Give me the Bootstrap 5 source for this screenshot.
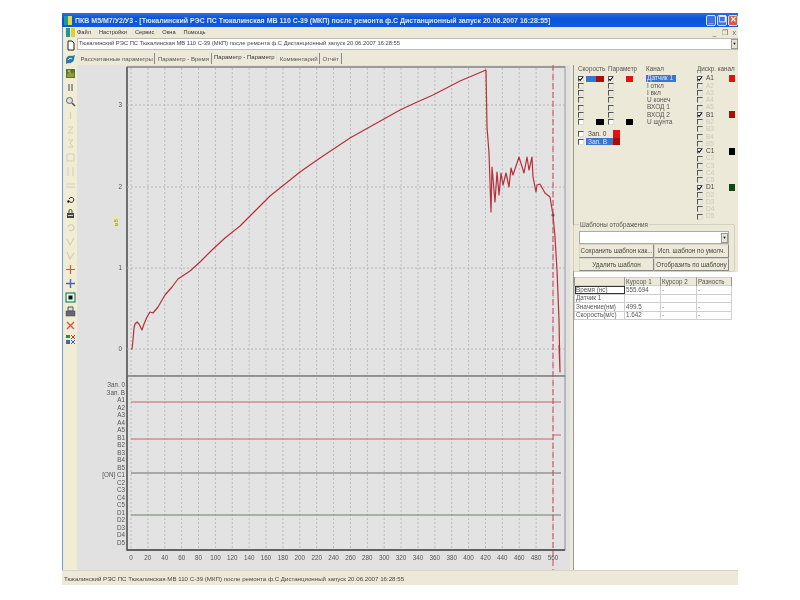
<!DOCTYPE html>
<html lang="ru">
<head>
<meta charset="UTF-8">
<title>ПКВ М5/М7/У2/У3</title>
<link href="https://cdn.jsdelivr.net/npm/bootstrap@5.3.3/dist/css/bootstrap.min.css" rel="stylesheet">
<style>
html, body { height: 100%; background: #fff; overflow: hidden; }
body { font-family: "Liberation Sans", "Noto Sans", sans-serif; font-size: 6.5px; line-height: 1; color: #444; }
.shell { padding: 13px 62px 14px 62px; height: 600px; filter: blur(.35px); }
.app { height: 572px; background: #ece9d8; }
.titlebar { height: 14px; background: linear-gradient(#2a6fe0, #0a54d6 40%, #0b5be2); color: #dfe9fb; font-size: 7px; font-weight: 700; padding-left: 2px; }
.app-ico { width: 8px; height: 9px; margin-right: 3px; background: linear-gradient(90deg, #1f9a8a 50%, #e9d44c 50%); }
.win-btn { width: 10px; height: 11px; margin-left: 1px; border-radius: 2px; border: 1px solid #cfe0fa; background: #3f74e0; font-size: 8px; color: #fff; }
.win-btn.close-x { background: #dd5a3a; }
.side { width: 15px; border-left: 1px solid #6f9ad8; background: #f0edd4; }
.tool { height: 14px; }
.tool svg { width: 11px; height: 11px; }
.tool.first { height: 11px; }
.menu { height: 11px; background: #ece9d8; }
.menu .nav-link { padding: 0 8px 0 0; color: #333; font-size: 5.7px; }
.mdi { font-size: 7px; color: #666; gap: 5px; padding-right: 2px; }
.docbox { height: 12px; background: #fff; border: 1px solid #bbb; border-right: 0; padding-left: 1px; font-size: 5.8px; color: #444; }
.drop { width: 7px; height: 10px; background: #e6e3d4; border: 1px solid #999; font-size: 4px; color: #000; }
.tabs { height: 15px; border: 0; padding-left: 1px; gap: 0; }
.tabs .nav-link { border: 0; border-right: 1px solid #888; border-radius: 0; background: transparent; color: #555; font-size: 6px; padding: 3px 1.5px 0 2.5px; height: 11px; margin-top: 3px; }
.tabs .nav-link.active { background: #ece9d8; color: #333; margin-top: 1px; height: 13px; }
.chart { width: 493px; height: 505px; background: #e1e1e1; }
.chart svg { display: block; }
.chart text { font-family: "Liberation Sans", sans-serif; font-size: 6.3px; fill: #555; }
.edge { width: 3px; }
.right { width: 165px; border-left: 1px solid #999; }
.top-block { height: 159px; padding: 1px 0 0 4px; }
.hd { height: 7px; font-size: 6.3px; color: #555; margin-bottom: 2px; white-space: nowrap; }
.r { height: 7.27px; }
.cb.form-check-input { width: 6px; height: 6px; margin: 0; flex: none; border-radius: 0; border: 1px solid #ddd; border-top-color: #555; border-left-color: #555; background-color: transparent; }
.cb.form-check-input.on { background-color: #fff; }
.cb.form-check-input:checked { background-color: #fff; background-size: 6px; background-image: url("data:image/svg+xml,%3csvg xmlns='http://www.w3.org/2000/svg' viewBox='0 0 6 6'%3e%3cpath d='M1 3l1.2 1.4L5 1' fill='none' stroke='%23000' stroke-width='1.1'/%3e%3c/svg%3e"); }
.col-speed { width: 30px; }
.col-param { width: 38px; }
.col-chan { width: 51px; }
.col-disc { width: 41px; }
.sw { display: block; height: 6px; }
.sw-blue { width: 10px; background: #3d74cf; margin-left: 2px; }
.sw-dred { width: 8px; background: #b00c0c; }
.sw-blk { width: 8px; background: #000; margin-left: 12px; }
.sw-red { width: 7px; background: #e01212; margin-left: 12px; }
.sw-blk2 { width: 7px; background: #000; margin-left: 12px; }
.chan { padding-left: 1px; color: #555; }
.chan.sel { background: #3d74cf; color: #dbe7fa; width: 30px; }
.disc-name { width: 26px; padding-left: 3px; color: #ccc9bb; }
.disc-name.act { color: #444; }
.disc-sq { width: 6px; height: 7px; }
.zap { margin-top: 4px; }
.zap-row { height: 8px; }
.zap-sel { background: #3d74cf; color: #dbe7fa; width: 27px; margin-left: 2px; padding-left: 2px; height: 7px; }
.zap-lbl { width: 27px; margin-left: 2px; padding-left: 2px; }
.zap-sq { width: 7px; height: 15px; background: linear-gradient(#e01212 50%, #a80c0c 50%); }
.tpl { height: 48px; margin: 0 3px 0 -1px; border: 1px solid #d3d0bd; border-radius: 2px; padding: 6px 5px 0 5px; position: relative; }
.tpl legend { position: absolute; top: -3px; left: 5px; width: auto; float: none; margin: 0; font-size: 6.3px; color: #555; background: #ece9d8; padding: 0 1px; }
.tplsel { height: 13px; background: #fff; border: 1px solid #aaa; }
.tpl .btn { flex: 0 0 50%; height: 13.5px; padding: 0; font-size: 6.3px; color: #444; background: #ece9d8; border: 1px solid #d8d5c4; border-radius: 0; border-right-color: #888; border-bottom-color: #888; }
.white { background: #fff; padding-top: 5px; }
.grid-t { width: 157px; table-layout: fixed; margin: 0; font-size: 6.3px; border-color: #cfcfcf; }
.grid-t th, .grid-t td { padding: 0 1px; height: 8.4px; font-weight: 400; color: #555; line-height: 1; vertical-align: middle; }
.grid-t th { background: #ece9d8; border-color: #999; }
.grid-t .focus { outline: 1px solid #333; outline-offset: -1px; }
.status { height: 15px; padding: 5px 0 0 2px; border-top: 1px solid #d8d5c4; font-size: 6.15px; color: #444; }
</style>
</head>
<body>
<div class="shell">
  <div class="app d-flex flex-column">
    <div class="titlebar d-flex align-items-center">
      <span class="app-ico"></span>
      <span class="flex-grow-1 text-nowrap">ПКВ М5/М7/У2/У3 - [Тюкалинский РЭС ПС Тюкалинская МВ 110 С-39 (МКП) после ремонта ф.С Дистанционный запуск 20.06.2007 16:28:55]</span>
      <span class="win-btn d-flex align-items-end justify-content-center">_</span>
      <span class="win-btn d-flex align-items-center justify-content-center">❐</span>
      <span class="win-btn close-x d-flex align-items-center justify-content-center">✕</span>
    </div>
    <div class="d-flex flex-grow-1" style="min-height:0">
      <div class="side d-flex flex-column" id="side"></div>
      <div class="flex-grow-1 d-flex flex-column" style="min-width:0">
        <div class="menu d-flex align-items-center justify-content-between">
          <ul class="nav">
            <li class="nav-item"><a class="nav-link" href="#">Файл</a></li>
            <li class="nav-item"><a class="nav-link" href="#">Настройки</a></li>
            <li class="nav-item"><a class="nav-link" href="#">Сервис</a></li>
            <li class="nav-item"><a class="nav-link" href="#">Окна</a></li>
            <li class="nav-item"><a class="nav-link" href="#">Помощь</a></li>
          </ul>
          <div class="mdi d-flex"><span>_</span><span>❐</span><span>x</span></div>
        </div>
        <div class="docbox d-flex align-items-center justify-content-between">
          <span class="text-nowrap">Тюкалинский РЭС ПС Тюкалинская МВ 110 С-39 (МКП) после ремонта ф.С Дистанционный запуск 20.06.2007 16:28:55</span>
          <span class="drop d-flex align-items-center justify-content-center">▼</span>
        </div>
        <ul class="nav nav-tabs tabs">
          <li class="nav-item"><a class="nav-link" href="#">Рассчитанные параметры</a></li>
          <li class="nav-item"><a class="nav-link" href="#">Параметр - Время</a></li>
          <li class="nav-item"><a class="nav-link active" href="#">Параметр - Параметр</a></li>
          <li class="nav-item"><a class="nav-link" href="#">Комментарий</a></li>
          <li class="nav-item"><a class="nav-link" href="#">Отчёт</a></li>
        </ul>
        <div class="d-flex flex-grow-1" style="min-height:0">
          <div class="chart"><svg id="plot" width="493" height="505" viewBox="77 65 493 505" xmlns="http://www.w3.org/2000/svg"></svg></div>
          <div class="edge"></div>
          <div class="right d-flex flex-column">
            <div class="top-block d-flex">
              <div>
                <div class="d-flex">
                  <div class="col-speed"><div class="hd">Скорость</div><div id="speed"></div></div>
                  <div class="col-param"><div class="hd">Параметр</div><div id="param"></div></div>
                </div>
                <div class="zap d-flex">
                  <div>
                    <div class="zap-row d-flex align-items-center"><input class="cb form-check-input on" type="checkbox"><span class="zap-lbl">Зап. 0</span></div>
                    <div class="zap-row d-flex align-items-center"><input class="cb form-check-input on" type="checkbox"><span class="zap-sel d-flex align-items-center">Зап. В</span></div>
                  </div>
                  <div class="zap-sq"></div>
                </div>
              </div>
              <div class="col-chan"><div class="hd">Канал</div><div id="chan"></div></div>
              <div class="col-disc"><div class="hd">Дискр. канал</div><div id="disc"></div></div>
            </div>
            <fieldset class="tpl">
              <legend>Шаблоны отображения</legend>
              <div class="tplsel d-flex justify-content-end align-items-center"><span class="drop d-flex align-items-center justify-content-center">▼</span></div>
              <div class="d-flex flex-wrap">
                <button type="button" class="btn">Сохранить шаблон как...</button>
                <button type="button" class="btn">Исп. шаблон по умолч.</button>
                <button type="button" class="btn">Удалить шаблон</button>
                <button type="button" class="btn">Отобразить по шаблону</button>
              </div>
            </fieldset>
            <div class="white flex-grow-1">
              <table class="table table-bordered grid-t">
                <colgroup><col style="width:50px"><col style="width:36px"><col style="width:36px"><col style="width:35px"></colgroup>
                <thead><tr><th></th><th>Курсор 1</th><th>Курсор 2</th><th>Разность</th></tr></thead>
                <tbody>
                  <tr><td class="focus">Время (нс)</td><td>555.694</td><td>-</td><td>-</td></tr>
                  <tr><td>Датчик 1</td><td></td><td></td><td></td></tr>
                  <tr><td>Значение(нм)</td><td>499.5</td><td>-</td><td>-</td></tr>
                  <tr><td>Скорость(м/с)</td><td>1.642</td><td>-</td><td>-</td></tr>
                </tbody>
              </table>
            </div>
          </div>
        </div>
      </div>
    </div>
    <div class="status text-nowrap">Тюкалинский РЭС ПС Тюкалинская МВ 110 С-39 (МКП) после ремонта ф.С Дистанционный запуск 20.06.2007 16:28:55</div>
  </div>
</div>
<script src="https://cdn.jsdelivr.net/npm/bootstrap@5.3.3/dist/js/bootstrap.bundle.min.js"></script>
<script>
/* ---------- левая панель ---------- */
const fade = '#d2cfbd';
const tools = [
  '<path d="M3 1h4l2 2v7H3z" fill="#fff" stroke="#222"/>',
  '<path d="M1 6c0-4 4-5 6-4l3-1-1 4c0 3-4 5-6 4l-2 1z" fill="#2f77a8"/><path d="M3 6c1-2 3-2 4-1" stroke="#bfe" fill="none"/>',
  '<rect x="1" y="1" width="9" height="9" fill="#557a2c"/><path d="M2 7l3-4 2 3 2-2v5H2z" fill="#9c9a3a"/><circle cx="4" cy="3" r="1" fill="#d8d060"/>',
  '<path d="M4 2v7M7 2v7" stroke="#777" stroke-width="1.4"/>',
  '<circle cx="4.5" cy="4.5" r="3" fill="#dde" stroke="#666"/><path d="M7 7l3 3" stroke="#555" stroke-width="1.6"/>',
  `<path d="M5.5 2v7" stroke="${fade}" stroke-width="1.2"/>`,
  `<path d="M3 3h5L3 9h5" stroke="${fade}" fill="none"/>`,
  `<path d="M3 2h5L5 5l3 4H3" stroke="${fade}" fill="none"/>`,
  `<rect x="2" y="2" width="7" height="7" fill="none" stroke="${fade}"/>`,
  `<path d="M3 1v9M8 1v9" stroke="${fade}"/>`,
  `<path d="M1 4h9M1 7h9" stroke="${fade}"/>`,
  '<path d="M4 5a2.5 2.5 0 1 1 1 3" fill="none" stroke="#333"/><circle cx="3.5" cy="7.5" r="1.2" fill="#111"/>',
  '<rect x="2" y="5" width="7" height="5" fill="#444"/><path d="M4 5V3a1.5 1.5 0 0 1 3 0v2" fill="none" stroke="#444"/><rect x="3" y="7" width="5" height="1" fill="#dd8"/>',
  `<path d="M3 5a3 3 0 1 1 1 3" fill="none" stroke="${fade}" stroke-width="1.2"/>`,
  `<path d="M2 3l3 6 4-7" stroke="${fade}" fill="none" stroke-width="1.2"/>`,
  `<path d="M2 2l3 7 4-6" stroke="${fade}" fill="none" stroke-width="1.2"/>`,
  '<path d="M5.5 1v9M1 5.5h9" stroke="#d8504a" stroke-width="1.2"/>',
  '<path d="M5.5 1v9M1 5.5h9" stroke="#4a62c8" stroke-width="1.4"/>',
  '<rect x="1" y="1" width="9" height="9" fill="#dfe" stroke="#164"/><rect x="3.5" y="3.5" width="4" height="4" fill="#111"/>',
  '<path d="M3 1h5v4H3z" fill="#ddd" stroke="#555"/><rect x="1" y="5" width="9" height="5" fill="#667" stroke="#444" stroke-width=".5"/>',
  '<path d="M2 2l7 7M9 2l-7 7" stroke="#d8504a" stroke-width="1.3"/>',
  '<path d="M1 1h4v3H1z" fill="#3a8a3a"/><path d="M6 1l4 4M10 1L6 5" stroke="#c33"/><path d="M1 6h4v4H1z" fill="#46a"/><path d="M6 6l4 4M10 6l-4 4" stroke="#36b"/>'
];
const side = document.getElementById('side');
side.innerHTML = '<div class="tool first d-flex justify-content-center align-items-center"><svg viewBox="0 0 11 11"><rect x="1" y="1" width="4" height="9" fill="#1f9a8a"/><rect x="6" y="1" width="4" height="9" fill="#e2c93e"/></svg></div>'
  + tools.map(t => `<div class="tool d-flex justify-content-center align-items-center"><svg viewBox="0 0 11 11">${t}</svg></div>`).join('');

/* ---------- панель каналов ---------- */
const cb = (checked, on) => `<input class="cb form-check-input${on ? ' on' : ''}" type="checkbox"${checked ? ' checked' : ''}>`;
const rows7 = fn => Array.from({ length: 7 }, (_, i) => `<div class="r d-flex align-items-center">${fn(i)}</div>`).join('');
document.getElementById('speed').innerHTML = rows7(i =>
  cb(i === 0, i === 6) + (i === 0 ? '<span class="sw sw-blue"></span><span class="sw sw-dred"></span>' : i === 6 ? '<span class="sw sw-blk"></span>' : ''));
document.getElementById('param').innerHTML = rows7(i =>
  cb(i === 0, i === 6) + (i === 0 ? '<span class="sw sw-red"></span>' : i === 6 ? '<span class="sw sw-blk2"></span>' : ''));
const chans = ['Датчик 1', 'I откл', 'I вкл', 'U конеч', 'ВХОД 1', 'ВХОД 2', 'U щунта'];
document.getElementById('chan').innerHTML = chans.map((c, i) =>
  `<div class="r chan${i === 0 ? ' sel' : ''} d-flex align-items-center">${c}</div>`).join('');
const discColors = { A1: '#e01212', B1: '#b00c0c', C1: '#000', D1: '#0d4a12' };
let disc = '';
for (const l of 'ABCD') for (let n = 1; n <= 5; n++) {
  const name = l + n, col = discColors[name];
  disc += `<div class="r d-flex align-items-center">${cb(!!col, !!col)}<span class="disc-name${col ? ' act' : ''}">${name}</span>${col ? `<span class="disc-sq" style="background:${col}"></span>` : ''}</div>`;
}
document.getElementById('disc').innerHTML = disc;

/* ---------- график ---------- */
const X0 = 131, DX = 16.88, RED = '#b5303a';
let s = '';
s += '<rect x="127" y="67" width="438" height="309" fill="#e3e3e3" stroke="#9a9a9a"/>';
s += '<rect x="127" y="376" width="438" height="174" fill="#e3e3e3" stroke="#8c8c8c"/>';
s += '<path d="M127 67V550H565" stroke="#444" stroke-width="1.3" fill="none"/><path d="M127 67H565M127 376H565" stroke="#777"/>';
for (let i = 0; i <= 25; i++) {
  const x = X0 + i * DX;
  s += `<path d="M${x} 68V375M${x} 378V550" stroke="#bcbcbc" stroke-dasharray="2 2"/>`;
  s += `<text x="${x}" y="560" text-anchor="middle">${i === 25 ? '560' : i * 20}</text>`;
}
[[3, 105], [2, 187], [1, 268], [0, 349]].forEach(([v, y]) => {
  s += `<path d="M127 ${y}H565" stroke="#b4b4b4" stroke-dasharray="2 2"/><text x="122" y="${y + 2}" text-anchor="end">${v}</text>`;
});
s += '<rect x="113" y="216" width="5" height="12" rx="2" fill="#e8e6b0"/><text transform="translate(118 226) rotate(-90)" style="font-size:5px;fill:#8a8a3c">мВ</text>';
const names = ['Зап. 0', 'Зап. В'];
for (const l of 'ABCD') for (let n = 1; n <= 5; n++) names.push((l + n === 'C1' ? '[ON] ' : '') + l + n);
names.forEach((n, i) => { s += `<text x="125" y="${387 + i * 7.52}" text-anchor="end">${n}</text>`; });
s += '<path d="M131 402H561M131 439H553M553 435H561" stroke="#cf5c68"/>';
s += '<path d="M131 473H561" stroke="#6c6c6c"/><path d="M131 515H561" stroke="#6f7f6f"/>';
const curve = [[131,349],[132,349],[133,340],[134,328],[135,324],[137,322],[139,324],[142,330],[144,324],[147,317],[150,312],[153,313],[158,307],[165,295],[172,287],[178,279],[184,275],[190,271],[200,262],[212,250],[225,238],[240,226],[255,211],[270,196],[285,184],[300,172],[320,158],[350,138],[375,124],[400,110],[415,103],[433,95],[460,81],[486,70],[487,127],[489,153],[491,212],[492,167],[495,202],[497,172],[499,195],[501,173],[503,185],[506,173],[509,187],[511,168],[513,175],[516,166],[519,157],[524,173],[527,157],[529,170],[532,157],[533,177],[536,192],[537,185],[540,184],[545,193],[550,197],[553,215],[555,237],[557,270],[559,320],[560,372],[559,345]];
s += `<polyline points="${curve.map(p => p.join(',')).join(' ')}" fill="none" stroke="${RED}" stroke-width="1.2" stroke-linejoin="round"/>`;
s += '<circle cx="553" cy="215" r="1.6" fill="#555"/>';
s += '<path d="M553 65V570" stroke="#d8405a" stroke-dasharray="6 3"/>';
document.getElementById('plot').innerHTML = s;
</script>
</body>
</html>
